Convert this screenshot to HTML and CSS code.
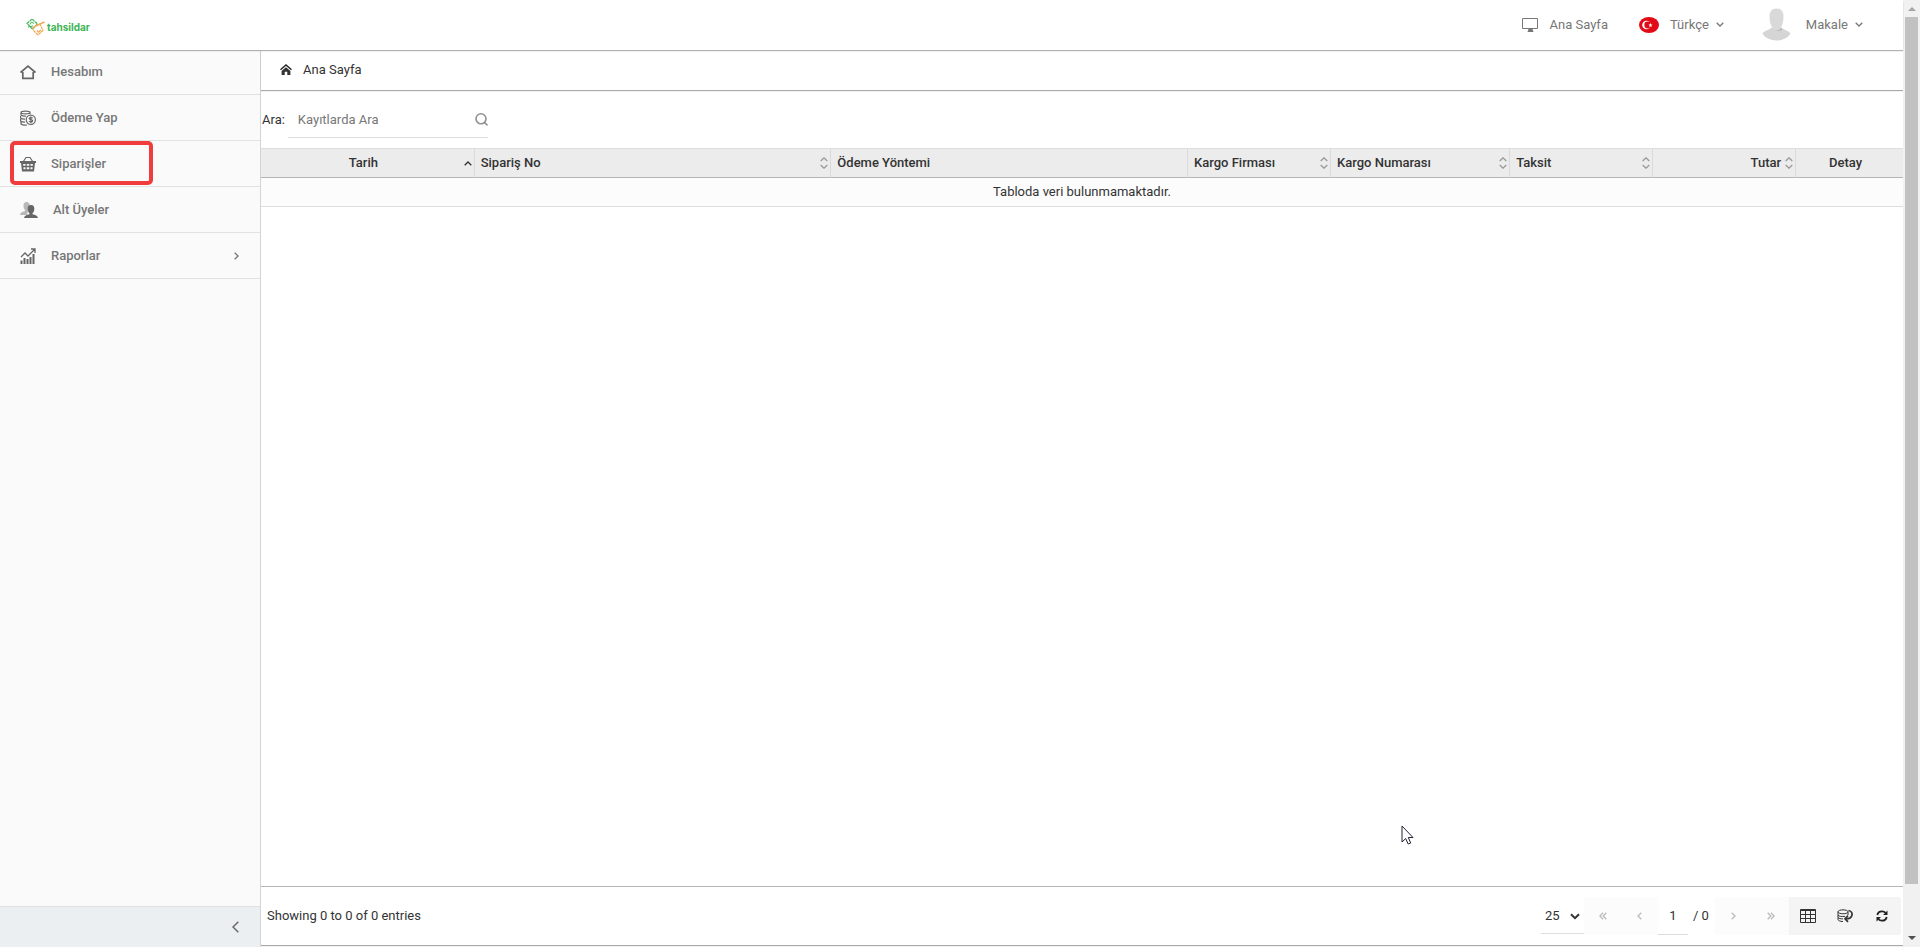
FILE: index.html
```html
<!DOCTYPE html>
<html lang="tr">
<head>
<meta charset="utf-8">
<title>Tahsildar - Siparişler</title>
<link rel="stylesheet" href="styles.css">
</head>
<body>
<div class="app">
  <header class="topbar">
    <a class="logo" href="#" aria-label="tahsildar">
      <svg width="19" height="18" viewBox="0 0 19 18" fill="none">
        <path d="M1 5.500 6 1 11.500 6 6.500 11Z" stroke="#3db554" stroke-width="1.200" stroke-dasharray="3 .6"/>
        <path d="M4 6.500 5.500 4 8 5.500M2 9l5-1" stroke="#3db554"/>
        <path d="M7 9.500 14 6l3 6.500-5 4.500-5-5z" stroke="#f3ab5b" stroke-width="1.200" stroke-dasharray="3 .6"/>
        <path d="m9.500 8 9-4M11 12.500l1.500 1.500L15 12" stroke="#f3ab5b" stroke-width="1.500"/>
      </svg>
      <span>tahsildar</span>
    </a>
    <nav class="topnav">
      <a class="top-link home-link" href="#">
        <svg width="17" height="16" viewBox="0 0 17 16"><path d="M.5 1.500h15v10H.5z" fill="none" stroke="#777"/><path d="M6.500 12h4l1 3h-6z" fill="#777"/></svg>
        Ana Sayfa
      </a>
      <button class="top-link lang-link">
        <svg width="20" height="16" viewBox="0 0 20 16"><ellipse cx="10" cy="8" rx="10" ry="8" fill="#e30a17"/><circle cx="7.500" cy="8" r="4.300" fill="#fff"/><circle cx="8.700" cy="8" r="3.400" fill="#e30a17"/><path d="m11.500 6 .6 1.400 1.500.1-1.200 1 .4 1.500-1.300-.8-1.300.8.4-1.500-1.200-1 1.500-.1z" fill="#fff"/></svg>
        <span>Türkçe</span>
        <svg class="caret" width="8" height="5" viewBox="0 0 8 5"><path d="m.7.7 3.300 3.300L7.300.7"/></svg>
      </button>
      <button class="top-link user-link">
        <svg width="29" height="33" viewBox="0 0 29 33"><path d="M9.500 19.500h10c1 2 7 3 9 6-2 4-8 7-14 7s-12-3-14-7c2-3 8-4 9-6z" fill="#d5d5d5"/><path d="M14 22.500c3 0 6-3 6-3v2.500c-2 1-4 1-6 .5z" fill="#bbb"/><path d="M14.500.5c5 0 7 3.500 7 8 0 7-2.500 13.500-7 13.500s-7-6.500-7-13.500c0-4.500 2-8 7-8z" fill="#d9d9d9"/></svg>
        <span>Makale</span>
        <svg class="caret" width="8" height="5" viewBox="0 0 8 5"><path d="m.7.7 3.300 3.300L7.300.7"/></svg>
      </button>
    </nav>
  </header>

  <div class="body">
    <aside class="sidebar">
      <nav class="menu">
        <a class="menu-item" href="#"><svg width="16" height="16" viewBox="0 0 16 16" fill="none" stroke="#666" stroke-width="1.700"><path d="M.5 8.500 8 2l7.500 6.500M2.800 8v6.300h10.400V8"/></svg><span>Hesabım</span></a>
        <a class="menu-item" href="#"><svg width="16" height="16" viewBox="0 0 16 16" fill="none" stroke="#666" stroke-width="1.200"><path d="M1 2.500C1 .7 10 .7 10 2.500S1 4.300 1 2.500V5c1 1 3 1.300 5 1.100M10 2.500V4M.5 6v2c1 1 2.500 1.200 4.500 1.200M.5 9v2c1 1 2.500 1.200 4.500 1.200M1 12v2c1 1 4 1.200 6 1"/><circle cx="10.800" cy="9.800" r="4.600"/><path d="M12.700 8.200c-.8-1-3.500-1-3.500.3s3.500.9 3.500 2.300-2.700 1.500-3.700.4M10.900 6.600v6.400"/></svg><span>Ödeme Yap</span></a>
        <a class="menu-item is-marked" href="#"><svg width="16" height="16" viewBox="0 0 16 16"><path d="m3 6 3-4.500h4L13 6" fill="none" stroke="#666" stroke-width="1.200"/><path fill="#666" fill-rule="evenodd" d="M0 5h16v2h-1l-1 8.500H2L1 7H0zM3.200 8v1.800h2.300V8zm3.500 0v1.800h2.600V8zm3.800 0v1.800h2.300V8zm-7 3.300v1.900h2v-1.900zm3.200 0v1.900h2.600v-1.900zm3.800 0v1.900h2v-1.900z"/></svg><span>Siparişler</span></a>
        <a class="menu-item" href="#"><svg width="18" height="16" viewBox="0 0 18 16"><path d="M6.500 0C9 0 10 1.800 9.800 4 9.600 6 9 7.500 8 8.500L7 13H0c0-2.500 2-3 5-4V8C4 7 3.500 5.500 3.500 3.500 3.500 1.500 4.500 0 6.500 0z" fill="#b8b8b8"/><path d="M11 3c2.500 0 3.300 1.700 3.300 3.800 0 2-.7 3.500-1.800 4.500v.9c3 .7 5 1.300 5.500 3.800H4c.5-2.500 2.500-3.100 5.500-3.800v-.9c-1.100-1-1.800-2.500-1.800-4.500C7.700 4.700 8.500 3 11 3z" fill="#666"/></svg><span>Alt Üyeler</span></a>
        <a class="menu-item" href="#"><svg width="16" height="16" viewBox="0 0 16 16"><path d="M.5 16v-3.500h2V16zm3 0v-6h2v6zm3 0v-5h2v5zm3 0V9h2v7zm3 0V6h2v10z" fill="#666"/><path d="m1 9 4-4 3 3 6.500-6.500M11 1h4v4" fill="none" stroke="#666" stroke-width="1.300"/></svg><span>Raporlar</span><svg class="more" width="5" height="8" viewBox="0 0 5 8"><path d="m.7.7 3.300 3.300L.7 7.300"/></svg></a>
      </nav>
      <button class="collapse" aria-label="Menüyü daralt"><svg width="7" height="12" viewBox="0 0 7 12"><path d="M6.300.8 1 6l5.300 5.200" fill="none" stroke="#666" stroke-width="1.500"/></svg></button>
    </aside>

    <main class="content">
      <div class="breadcrumb">
        <svg width="12" height="11" viewBox="0 0 12 11"><path d="M.5 5.700 6 1l5.500 4.700" fill="none" stroke="#222" stroke-width="1.400"/><path d="M6 3.200 10.400 7v4H7.300V7.800H4.700V11H1.600V7z" fill="#333"/></svg>
        <a href="#">Ana Sayfa</a>
      </div>
      <div class="search">
        <label for="q">Ara:</label>
        <div class="search-box">
          <input id="q" type="text" placeholder="Kayıtlarda Ara">
          <svg width="13" height="13" viewBox="0 0 13 13" fill="none" stroke="#909090" stroke-width="1.600"><circle cx="6" cy="5.800" r="5"/><path d="m9 9 3.500 3.300"/></svg>
        </div>
      </div>
      <table class="grid">
        <colgroup><col class="w6"><col class="w10"><col class="w10"><col class="w4"><col class="w5"><col class="w4"><col class="w4"><col class="w3"></colgroup>
        <thead>
          <tr>
            <th><div class="th center"><span>Tarih</span><svg class="asc" width="8" height="5" viewBox="0 0 8 5"><path d="M.7 4.300 4 1l3.300 3.300"/></svg></div></th>
            <th><div class="th"><span>Sipariş No</span><svg class="sort" width="8" height="12" viewBox="0 0 8 12"><path d="M.7 4 4 .8 7.300 4M.7 8 4 11.200 7.300 8"/></svg></div></th>
            <th><div class="th"><span>Ödeme Yöntemi</span></div></th>
            <th><div class="th"><span>Kargo Firması</span><svg class="sort" width="8" height="12" viewBox="0 0 8 12"><path d="M.7 4 4 .8 7.300 4M.7 8 4 11.200 7.300 8"/></svg></div></th>
            <th><div class="th"><span>Kargo Numarası</span><svg class="sort" width="8" height="12" viewBox="0 0 8 12"><path d="M.7 4 4 .8 7.300 4M.7 8 4 11.200 7.300 8"/></svg></div></th>
            <th><div class="th"><span>Taksit</span><svg class="sort" width="8" height="12" viewBox="0 0 8 12"><path d="M.7 4 4 .8 7.300 4M.7 8 4 11.200 7.300 8"/></svg></div></th>
            <th><div class="th right"><span>Tutar</span><svg class="sort" width="8" height="12" viewBox="0 0 8 12"><path d="M.7 4 4 .8 7.300 4M.7 8 4 11.200 7.300 8"/></svg></div></th>
            <th><div class="th center last"><span>Detay</span></div></th>
          </tr>
        </thead>
        <tbody><tr><td colspan="8">Tabloda veri bulunmamaktadır.</td></tr></tbody>
      </table>
      <footer class="footer">
        <span class="info">Showing 0 to 0 of 0 entries</span>
        <div class="size"><select aria-label="Sayfa boyutu"><option>25</option><option>50</option></select><svg width="10" height="7" viewBox="0 0 10 7"><path d="m1 1.200 4 4 4-4" fill="none" stroke="#333" stroke-width="2"/></svg></div>
        <button class="pg" disabled aria-label="İlk"><svg width="8" height="8" viewBox="0 0 8 8"><path d="M4 .7.900 4 4 7.300M7.300.7 4.200 4l3.100 3.300"/></svg></button>
        <button class="pg" disabled aria-label="Önceki"><svg width="5" height="8" viewBox="0 0 5 8"><path d="M4.300.7 1 4l3.300 3.300"/></svg></button>
        <input class="page" type="text" value="1" aria-label="Sayfa">
        <span class="total">/ 0</span>
        <button class="pg" disabled aria-label="Sonraki"><svg width="5" height="8" viewBox="0 0 5 8"><path d="M.7.7 4 4 .7 7.300"/></svg></button>
        <button class="pg" disabled aria-label="Son"><svg width="8" height="8" viewBox="0 0 8 8"><path d="M.7.7 3.800 4 .7 7.300M4 .7 7.100 4 4 7.300"/></svg></button>
        <div class="tools">
          <button aria-label="Sütunlar"><svg width="16" height="14" viewBox="0 0 16 14" fill="none" stroke="#333"><path d="M.5.5h15v13H.5zM.5 1.500h15M.5 5.500h15M.5 9.500h15M5.500 1v12.500M10.500 1v12.500"/></svg></button>
          <button aria-label="Dışa aktar"><svg width="16" height="14" viewBox="0 0 16 14" fill="none" stroke="#333"><path d="M1 2.800C1 .2 11 .2 11 2.800S1 5.400 1 2.800v7.700c0 1 2 2 5 2M1 6c1 1.500 4 1.800 7 1.300M1 8.500c1 1 2.500 1.400 5 1.400M11 2.800V6"/><path d="M11.500 1.500c3.500.5 4.200 3.500 3 5.800-.8 1.700-2.300 2.400-5 2.400M11 6.500 8 9.700l3 3.200" stroke-width="1.700"/></svg></button>
          <button aria-label="Yenile"><svg width="12" height="12" viewBox="0 0 12 12"><path d="M1.300 5C1.800 2.500 3.700 1.300 6 1.300c1.500 0 2.700.5 3.700 1.500M10.700 7c-.5 2.500-2.400 3.700-4.700 3.700-1.500 0-2.700-.5-3.700-1.500" fill="none" stroke="#222" stroke-width="1.800"/><path d="M11.500.5V5H7zM.5 11.500V7H5z" fill="#222"/></svg></button>
        </div>
      </footer>
    </main>
  </div>
</div>
<div class="scrollbar" aria-hidden="true">
  <svg width="8" height="4" viewBox="0 0 8 4"><path d="M0 4 4 0l4 4z" fill="#a3a3a3"/></svg>
  <div class="thumb"></div>
  <svg width="8" height="4" viewBox="0 0 8 4"><path d="m0 0 4 4 4-4z" fill="#505050"/></svg>
</div>
<svg class="cursor" width="13" height="20" viewBox="0 0 13 20"><path d="M1 1v16l3.700-3.500 2.500 5.500 2.500-1-2.400-5.500H12z" fill="#fff" stroke="#223"/></svg>
</body>
</html>
```
FILE: styles.css
```css
*, *::before, *::after { box-sizing: border-box; }
body {
  margin: 0;
  height: 100vh;
  display: flex;
  overflow: hidden;
  font: 13px/20px Roboto, "Liberation Sans", sans-serif;
  color: #333;
  background: #fff;
}
a { color: inherit; text-decoration: none; }
button, input, select { font: inherit; color: inherit; border: 0; background: none; padding: 0; margin: 0; outline: 0; border-radius: 0; }
svg { display: block; flex: none; }

.app { flex: 1; min-width: 0; display: flex; flex-direction: column; }

.topbar {
  position: relative;
  z-index: 1;
  height: 49px;
  flex: none;
  display: flex;
  align-items: center;
  justify-content: space-between;
  padding: 0 40px 0 26px;
  background: #fff;
  box-shadow: 0 1px 0 #fff, 0 2px 1px #b0b0b0;
}
.logo { display: flex; align-items: center; gap: 2px; padding-top: 4px; font: bold 10px/18px Inter, sans-serif; color: #3db554; }
.topnav { display: flex; align-items: center; color: #777; }
.top-link { display: flex; align-items: center; }
.home-link { gap: 10px; }
.lang-link { gap: 11px; margin-left: 31px; }
.user-link { gap: 15px; margin-left: 38px; }
.caret, .more, .asc, .sort, .pg svg { fill: none; stroke: #777; stroke-width: 1.3px; }
.lang-link .caret { margin-left: -4px; }
.user-link .caret { margin-left: -8px; }

.body { flex: 1; min-height: 0; display: flex; }
.sidebar {
  width: 261px;
  flex: none;
  display: flex;
  flex-direction: column;
  justify-content: space-between;
  background: #fafafa;
  border-right: 1px solid #ddd;
}
.menu { display: flex; flex-direction: column; }
.menu-item {
  position: relative;
  height: 46px;
  display: flex;
  align-items: center;
  gap: 15px;
  padding: 0 20px;
  border-bottom: 1px solid #e2e2e2;
  font-weight: 500;
  color: #777;
}
.more { margin: 0 1px 0 auto; }
.is-marked::after {
  content: "";
  position: absolute;
  left: 10px;
  top: 0;
  width: 143px;
  height: 44px;
  border: 4px solid #f03c3c;
  border-radius: 5px;
}
.collapse {
  height: 41px;
  display: flex;
  align-items: center;
  justify-content: flex-end;
  padding-right: 21px;
  background: #ebeff2;
  border-top: 1px solid #e0e0e0;
}

.content {
  flex: 1;
  min-width: 0;
  display: flex;
  flex-direction: column;
  margin-bottom: 2px;
  box-shadow: 0 1px 1px #aaa;
}
.breadcrumb {
  height: 41px;
  flex: none;
  display: flex;
  align-items: center;
  gap: 11px;
  padding: 0 19px;
  box-shadow: 0 1px 1px #aaa;
}
.search { height: 58px; flex: none; display: flex; align-items: center; gap: 3px; padding: 2px 1px 0; }
.search-box { width: 200px; height: 36px; display: flex; align-items: center; border-bottom: 1px solid #ddd; }
.search-box input { flex: 1; min-width: 0; height: 35px; padding-left: 10px; }
.search-box input::placeholder { color: #777; opacity: 1; }

.grid { width: 100%; table-layout: fixed; border-collapse: separate; border-spacing: 0; }
.w3 { width: 6.5%; }
.w4 { width: 8.7%; }
.w5 { width: 10.9%; }
.w6 { width: 13%; }
.w10 { width: 21.7%; }
.grid th {
  padding: 0;
  background: #ececec;
  border-top: 1px solid #ddd;
  border-bottom: 1px solid #b5b5b5;
  border-right: 1px solid #dadada;
  font-weight: 500;
}
.grid th:last-child { border-right: 0; }
.th { height: 28px; display: flex; align-items: center; justify-content: space-between; padding: 0 2px 0 6px; }
.th.center { padding-left: 2px; }
.th.center span { flex: 1; text-align: center; }
.th.right { justify-content: flex-end; gap: 4px; }
.th.last { padding: 0 8px 0 0; }
.th .sort { stroke: #999; }
.th .asc { stroke: #333; }
.grid td { height: 29px; padding: 0; text-align: center; background: #fcfcfc; border-bottom: 1px solid #ddd; }

.footer {
  height: 59px;
  flex: none;
  display: flex;
  align-items: center;
  margin-top: auto;
  padding: 0 2px 0 6px;
  border-top: 1px solid #b5b5b5;
}
.info { margin-right: auto; }
.size { position: relative; height: 36px; width: 43px; border-bottom: 1px solid #ddd; }
.size select { appearance: none; width: 100%; height: 35px; padding-left: 4px; }
.size svg { position: absolute; right: 4px; top: 15px; pointer-events: none; }
.pg, .tools button { width: 37px; height: 38px; display: flex; align-items: center; justify-content: center; }
.pg { background: #fcfcfc; }
.pg svg { stroke: #bbb; }
.page { width: 30px; height: 38px; text-align: center; border-bottom: 1px solid #ddd; }
.total { width: 27px; padding-left: 5px; }
.tools { display: flex; padding-right: 1px; background: #f4f4f4; border-radius: 0 3px 3px 0; }

.scrollbar {
  width: 17px;
  flex: none;
  display: flex;
  flex-direction: column;
  align-items: center;
  justify-content: space-between;
  padding: 7px 0;
  background: #f1f1f1;
}
.thumb { width: 13px; flex: 1; margin: 6px 0 52px; background: #c1c1c1; }
.cursor { position: absolute; left: 1401px; top: 825px; }
```
